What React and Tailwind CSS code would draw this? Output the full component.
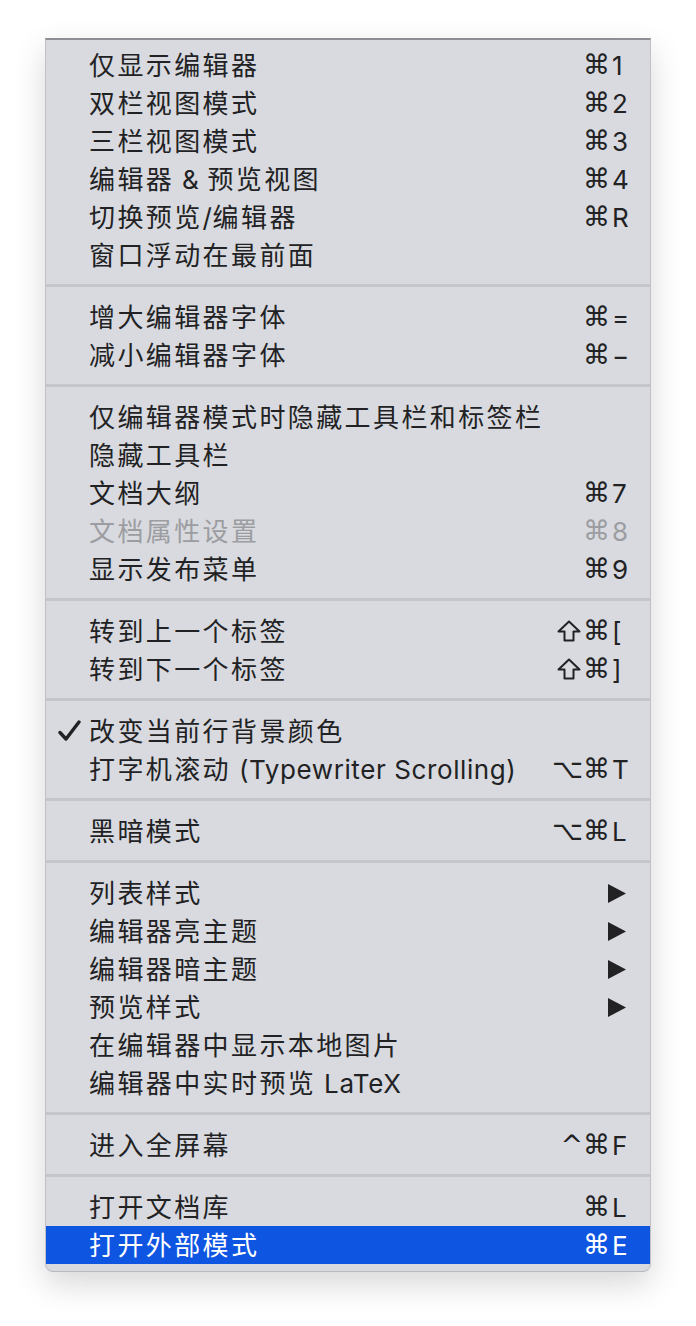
import React from 'react';

// View menu, grouped by separators
const groups = [
  [
    { label: '仅显示编辑器', mod: '⌘', keyName: '1' },
    { label: '双栏视图模式', mod: '⌘', keyName: '2' },
    { label: '三栏视图模式', mod: '⌘', keyName: '3' },
    { label: '编辑器 & 预览视图', mod: '⌘', keyName: '4' },
    { label: '切换预览/编辑器', mod: '⌘', keyName: 'R' },
    { label: '窗口浮动在最前面' },
  ],
  [
    { label: '增大编辑器字体', mod: '⌘', keyName: '=' },
    { label: '减小编辑器字体', mod: '⌘', keyName: '−' },
  ],
  [
    { label: '仅编辑器模式时隐藏工具栏和标签栏' },
    { label: '隐藏工具栏' },
    { label: '文档大纲', mod: '⌘', keyName: '7' },
    { label: '文档属性设置', mod: '⌘', keyName: '8', disabled: true },
    { label: '显示发布菜单', mod: '⌘', keyName: '9' },
  ],
  [
    { label: '转到上一个标签', mod: '⌘', shift: true, keyName: '[' },
    { label: '转到下一个标签', mod: '⌘', shift: true, keyName: ']' },
  ],
  [
    { label: '改变当前行背景颜色', checked: true },
    { label: '打字机滚动 (Typewriter Scrolling)', mod: '⌥⌘', keyName: 'T' },
  ],
  [{ label: '黑暗模式', mod: '⌥⌘', keyName: 'L' }],
  [
    { label: '列表样式', submenu: true },
    { label: '编辑器亮主题', submenu: true },
    { label: '编辑器暗主题', submenu: true },
    { label: '预览样式', submenu: true },
    { label: '在编辑器中显示本地图片' },
    { label: '编辑器中实时预览 LaTeX' },
  ],
  [{ label: '进入全屏幕', mod: '^⌘', keyName: 'F' }],
  [
    { label: '打开文档库', mod: '⌘', keyName: 'L' },
    { label: '打开外部模式', mod: '⌘', keyName: 'E', active: true },
  ],
];

const Check = () => (
  <svg width="23" height="22" viewBox="0 0 23 22" className="absolute left-[12px] top-[8px]">
    <path d="M2 12.5 L8 19 L21 2" fill="none" stroke="currentColor" strokeWidth="3.4" strokeLinecap="round" strokeLinejoin="round" />
  </svg>
);

const Arrow = () => (
  <svg width="18" height="19" viewBox="0 0 18 19" className="block">
    <polygon points="0,0 18,9.5 0,19" fill="currentColor" />
  </svg>
);

// outlined shift arrow
const Shift = () => (
  <svg width="24" height="22" viewBox="0 0 24 22" className="block mr-[2px]">
    <polygon
      points="12,1.5 22.5,11.5 16.5,11.5 16.5,20.5 7.5,20.5 7.5,11.5 1.5,11.5"
      fill="none"
      stroke="currentColor"
      strokeWidth="2"
      strokeLinejoin="round"
    />
  </svg>
);

// CJK runs get a little tracking, Latin runs stay near natural width
const Label = ({ text }) =>
  text.split(/([\u0000-\u024F]+)/).filter(Boolean).map((part, i) =>
    /[\u0000-\u024F]/.test(part) ? (
      <span key={i} className="tracking-[0.6px]">{part}</span>
    ) : (
      <span key={i} className="tracking-[2.4px]">{part}</span>
    )
  );

const Row = ({ item }) => {
  const color = item.active
    ? 'bg-[#0e55e2] text-white'
    : item.disabled
    ? 'text-[#9c9da1]'
    : 'text-[#222224]';

  return (
    <div className={`relative flex items-center h-[38px] pl-[43px] pr-[20px] ${color}`}>
      {item.checked && <Check />}
      <span className="flex-1 whitespace-pre">
        <Label text={item.label} />
      </span>
      {item.shift && <Shift />}
      {item.mod && (
        <span className="text-right font-['DejaVu_Sans',sans-serif] text-[27px] mr-[2px]">{item.mod}</span>
      )}
      {item.keyName && <span className="w-[18px] text-left">{item.keyName}</span>}
      {item.submenu && (
        <span className="w-[22px] flex justify-start">
          <Arrow />
        </span>
      )}
    </div>
  );
};

export default function App() {
  return (
    <div className="min-h-[1326px] bg-white pt-[38px] pl-[45px]">
      <div
        className="w-[606px] bg-[#d8dadf] border-t-2 border-t-[#8e8f94] border-x border-b border-x-[#c0c1c5] border-b-[#b8b9bd] rounded-b-[8px] pt-[6px] pb-[7px] shadow-[0_12px_32px_rgba(0,0,0,0.16)] overflow-hidden text-[26px] font-['Inter','Noto_Sans_CJK_SC',sans-serif]"
      >
        {groups.map((group, gi) => (
          <div key={gi}>
            {gi > 0 && (
              <div className="pt-[10px] pb-[11px]">
                <div className="h-[3px] bg-[#c4c6ca]" />
              </div>
            )}
            {group.map((item, ii) => (
              <Row key={ii} item={item} />
            ))}
          </div>
        ))}
      </div>
    </div>
  );
}
